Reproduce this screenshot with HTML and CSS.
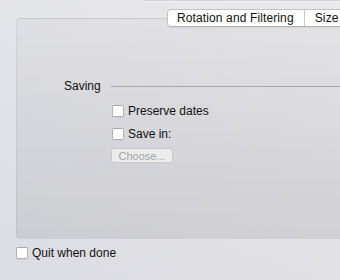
FILE: index.html
```html
<!DOCTYPE html>
<html lang="en">
<head>
    <meta charset="UTF-8">
    <title>Preferences</title>
    <link rel="stylesheet" href="styles.css">
</head>
<body>
    <div class="window">
        <div class="topbar"></div>
        <div class="tabs">
            <div class="tab">Rotation and Filtering</div>
            <div class="tab">Size</div>
        </div>
        <div class="box">
            <div class="section">
                <span class="section-title">Saving</span>
                <span class="rule"></span>
            </div>
            <div class="options">
                <label class="option"><span class="check"></span>Preserve dates</label>
                <label class="option second"><span class="check"></span>Save in:</label>
                <button class="btn" disabled>Choose...</button>
            </div>
        </div>
        <label class="option quit"><span class="check"></span>Quit when done</label>
    </div>
</body>
</html>
```

FILE: styles.css
```css
html, body {
    margin: 0;
    padding: 0;
}
body {
    width: 340px;
    height: 280px;
    overflow: hidden;
    font-family: "Liberation Sans", Arial, sans-serif;
    font-size: 12px;
    color: #111;
    background: linear-gradient(to right, #e0e1e6, #e6e6e7);
}
.window {
    height: 280px;
    background: linear-gradient(to bottom, rgba(255, 255, 255, 0.15), rgba(200, 202, 212, 0.2));
}
.topbar {
    margin-left: 143px;
    height: 1px;
    background: #d4d4d6;
    border-bottom: 1px solid #f1f1f3;
}
.tabs {
    position: relative;
    z-index: 1;
    display: flex;
    margin: 7px 0 -9px 167px;
    height: 18px;
    box-sizing: border-box;
    background: #fff;
    border: 1px solid #c2c2c2;
    border-bottom-color: #b4b4b4;
    border-right: none;
    border-radius: 4px 0 0 4px;
    box-shadow: 0 1px 1px rgba(0, 0, 0, 0.06);
}
.tab {
    line-height: 16px;
    padding: 0 10px 0 9px;
    letter-spacing: 0.12px;
    white-space: nowrap;
}
.tab + .tab {
    border-left: 1px solid #c8c8c8;
    padding-left: 10px;
}
.box {
    margin-left: 16px;
    width: 340px;
    height: 221px;
    box-sizing: border-box;
    background: linear-gradient(to bottom, rgba(0, 0, 0, 0.025), rgba(0, 0, 0, 0.075));
    border: 1px solid rgba(0, 0, 0, 0.05);
    border-right: none;
    border-radius: 4px 0 0 4px;
}
.section {
    display: flex;
    align-items: center;
    height: 14px;
    margin-top: 60px;
    padding-left: 47px;
}
.rule {
    flex: 1;
    height: 1px;
    margin-left: 10px;
    background: #a6a6a8;
}
.options {
    display: flex;
    flex-direction: column;
    align-items: flex-start;
    margin-top: 11px;
    padding-left: 95px;
}
.option {
    display: flex;
    align-items: center;
    height: 14px;
    line-height: 14px;
}
.option.second {
    margin-top: 9px;
}
.check {
    width: 12px;
    height: 12px;
    box-sizing: border-box;
    margin-right: 4px;
    background: #fff;
    border: 1px solid #b2b2b2;
    border-top-color: #a8a8a8;
    border-radius: 2px;
    box-shadow: 0 1px 0 rgba(0, 0, 0, 0.05);
}
.btn {
    margin: 7px 0 0 -1px;
    width: 62px;
    height: 15px;
    padding: 0;
    font-family: inherit;
    font-size: 11px;
    color: #a3a3a5;
    background: #ececed;
    border: 1px solid #c9c9cb;
    border-radius: 3px;
}
.quit {
    margin: 7px 0 0 16px;
}
```
